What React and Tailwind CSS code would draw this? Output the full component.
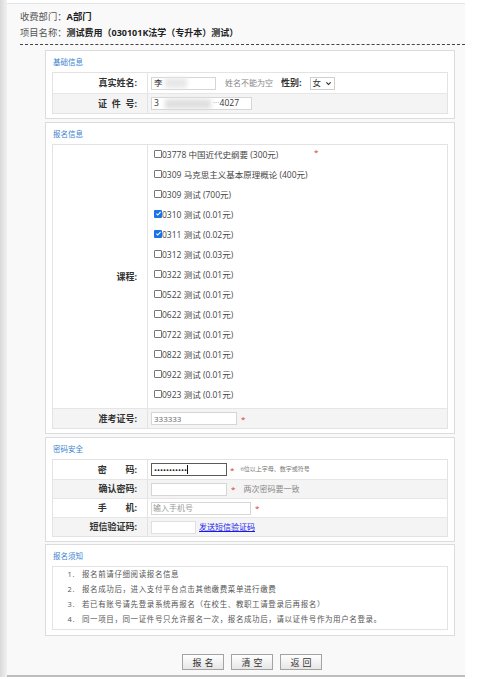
import React from 'react';

const courses = [
    { code: '03778', name: '中国近代史纲要', price: '300元', checked: false },
    { code: '0309', name: '马克思主义基本原理概论', price: '400元', checked: false },
    { code: '0309', name: '测试', price: '700元', checked: false },
    { code: '0310', name: '测试', price: '0.01元', checked: true },
    { code: '0311', name: '测试', price: '0.02元', checked: true },
    { code: '0312', name: '测试', price: '0.03元', checked: false },
    { code: '0322', name: '测试', price: '0.01元', checked: false },
    { code: '0522', name: '测试', price: '0.01元', checked: false },
    { code: '0622', name: '测试', price: '0.01元', checked: false },
    { code: '0722', name: '测试', price: '0.01元', checked: false },
    { code: '0822', name: '测试', price: '0.01元', checked: false },
    { code: '0922', name: '测试', price: '0.01元', checked: false },
    { code: '0923', name: '测试', price: '0.01元', checked: false },
];

const notes = [
    '报名前请仔细阅读报名信息',
    '报名成功后，进入支付平台点击其他缴费菜单进行缴费',
    '若已有账号请先登录系统再报名（在校生、教职工请登录后再报名）',
    '同一项目，同一证件号只允许报名一次，报名成功后，请以证件号作为用户名登录。',
];

const Box = ({ title, className = '', children }) => (
    <div className={`w-[410px] ml-[38px] border border-[#dcdcdc] bg-white px-[6px] pt-[5px] pb-[4px] ${className}`}>
        <div className="h-[12px] leading-[12px] text-[7.5px] text-[#3a7fd0] pl-[1px]">{title}</div>
        <div className="mt-[4px]">{children}</div>
    </div>
);

const Row = ({ label, gray, tall = 'h-[20px]', children }) => (
    <div className={`flex ${tall} ${gray ? 'bg-[#f4f4f4]' : 'bg-white'} border-t border-[#e6e6e6] first:border-t-0`}>
        <div className="w-[95px] shrink-0 border-r border-[#e3e3e3] flex items-center justify-end pr-[10px] text-[9px] font-bold text-[#333] whitespace-pre">
            {label}
        </div>
        <div className="flex-1 flex items-center pl-[3px]">{children}</div>
    </div>
);

const Table = ({ children }) => (
    <div className="border border-[#e3e3e3]">{children}</div>
);

const Star = ({ className = '' }) => (
    <span className={`text-[#e0322d] text-[8px] leading-none ${className}`}>*</span>
);

const Check = ({ checked }) =>
    checked ? (
        <span className="w-[8px] h-[8px] rounded-[1px] bg-[#1a73e8] flex items-center justify-center shrink-0 -mt-[3px]">
            <svg viewBox="0 0 10 10" className="w-[7px] h-[7px]">
                <path d="M2 5.2l2 2 4-4.4" fill="none" stroke="#fff" strokeWidth="1.6" />
            </svg>
        </span>
    ) : (
        <span className="w-[8px] h-[8px] rounded-[1px] border border-[#777] bg-white shrink-0 -mt-[3px]" />
    );

const Btn = ({ children }) => (
    <button className="w-[42px] h-[16px] border border-[#a3a3a3] bg-gradient-to-b from-white to-[#e6e6e6] text-[9px] text-[#333] tracking-[3px] pl-[3px] leading-none">
        {children}
    </button>
);

export default function App() {
    return (
        <div className="w-[481px] h-[679px] bg-white flex overflow-hidden [font-family:'Open_Sans','Noto_Sans_CJK_SC',sans-serif]">
            <div className="w-[7px] h-[677px] bg-gradient-to-r from-[#d9d9d9] to-[#f2f2f2]" />
            <div className="w-[458px] h-[674px] mt-[3px] bg-[#f9f9f9] border-t border-[#e4e4e4] border-b-2 border-b-[#bdbdbd]">
                {/* 顶部信息 */}
                <div className="ml-[13px] pt-[5px] pb-[3px] border-b border-dashed border-[#444] text-[9.3px] leading-[16px] text-[#555]">
                    <div>
                        收费部门：<span className="font-bold text-[#222]">A部门</span>
                    </div>
                    <div>
                        项目名称：<span className="font-bold text-[#222] text-[9px]">测试费用（030101K法学（专升本）测试）</span>
                    </div>
                </div>

                <Box title="基础信息" className="mt-[5px]">
                    <Table>
                        <Row label="真实姓名:">
                            <div className="w-[65px] h-[13px] border border-[#d6d6d6] bg-white flex items-center px-[2px] text-[8.5px] text-[#333]">
                                李<span className="ml-[2px] w-[22px] h-[10px] bg-[#e8e8e8] blur-[2px]" />
                            </div>
                            <span className="ml-[9px] text-[8px] text-[#888]">姓名不能为空</span>
                            <span className="ml-[8px] text-[9px] font-bold text-[#333]">性别:</span>
                            <div className="ml-[8px] w-[25px] h-[13px] border border-[#cfcfcf] bg-white flex items-center justify-between px-[2px] text-[8.5px] text-[#333]">
                                女
                                <svg viewBox="0 0 10 10" className="w-[7px] h-[7px]">
                                    <path d="M2 3.5l3 3 3-3" fill="none" stroke="#222" strokeWidth="1.6" />
                                </svg>
                            </div>
                        </Row>
                        <Row label="证  件  号:" gray>
                            <div className="w-[101px] h-[13px] border border-[#d6d6d6] bg-white flex items-center px-[2px] text-[8.5px] text-[#333]">
                                3<span className="ml-[6px] w-[46px] h-[10px] bg-[#e0e0e0] blur-[2px]" />
                                <span className="ml-[2px] text-[#aaa]">···</span>4027
                            </div>
                        </Row>
                    </Table>
                </Box>

                <Box title="报名信息" className="mt-[3px]">
                    <Table>
                        <Row label="课程:" tall="h-[263px]">
                            <div className="pl-[3px] pb-[3px] self-start">
                                {courses.map((c, i) => (
                                    <div key={i} className="h-[20px] flex items-center text-[8.5px] text-[#444]">
                                        <div className="w-[160px] flex items-center whitespace-nowrap">
                                            <Check checked={c.checked} />
                                            {c.code} {c.name} ({c.price})
                                        </div>
                                        {i === 0 && <Star className="-mt-[6px]" />}
                                    </div>
                                ))}
                            </div>
                        </Row>
                        <Row label="准考证号:" gray>
                            <div className="w-[86px] h-[13px] border border-[#d6d6d6] bg-white flex items-center px-[2px] text-[8px] text-[#666]">
                                333333
                            </div>
                            <Star className="ml-[4px]" />
                        </Row>
                    </Table>
                </Box>

                <Box title="密码安全" className="mt-[3px]">
                    <Table>
                        <Row label="密        码:" tall="h-[19px]">
                            <div className="w-[76px] h-[13px] border border-[#5a5a5a] bg-white flex items-center px-[2px] text-[8px] leading-none text-[#222]">
                                •••••••••••<span className="w-px h-[9px] bg-[#111]" />
                            </div>
                            <Star className="ml-[3px]" />
                            <span className="ml-[6px] text-[6px] text-[#777]">6位以上字母、数字或符号</span>
                        </Row>
                        <Row label="确认密码:" gray tall="h-[19px]">
                            <div className="w-[76px] h-[13px] border border-[#d6d6d6] bg-white" />
                            <Star className="ml-[4px]" />
                            <span className="ml-[8px] text-[8px] text-[#888]">两次密码要一致</span>
                        </Row>
                        <Row label="手        机:" tall="h-[19px]">
                            <div className="w-[100px] h-[13px] border border-[#d6d6d6] bg-white flex items-center px-[1px] text-[8px] text-[#999]">
                                输入手机号
                            </div>
                            <Star className="ml-[4px]" />
                        </Row>
                        <Row label="短信验证码:" gray tall="h-[19px]">
                            <div className="w-[45px] h-[13px] border border-[#e0e0e0] bg-white" />
                            <a className="ml-[3px] text-[8px] text-[#1a1aee] underline">发送短信验证码</a>
                        </Row>
                    </Table>
                </Box>

                <Box title="报名须知" className="mt-[2px] pb-[5px]">
                    <div className="border border-[#e3e3e3] pb-[2px]">
                        {notes.map((n, i) => (
                            <div key={i} className="h-[15px] flex items-center text-[7.5px] tracking-[0.6px] text-[#555]">
                                <span className="w-[22px] text-right">{i + 1}.</span>
                                <span className="ml-[7px] whitespace-nowrap">{n}</span>
                            </div>
                        ))}
                    </div>
                </Box>

                <div className="w-[410px] ml-[38px] mt-[18px] flex justify-center gap-[7px] pl-[4px]">
                    <Btn>报名</Btn>
                    <Btn>清空</Btn>
                    <Btn>返回</Btn>
                </div>
            </div>
        </div>
    );
}
